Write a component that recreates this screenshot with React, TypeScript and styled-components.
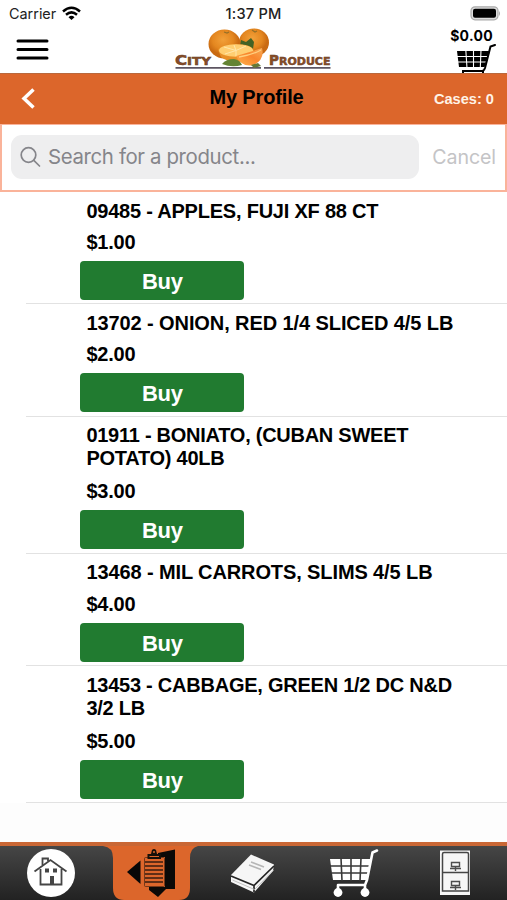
import React from 'react';
import styled, { createGlobalStyle } from 'styled-components';

const Global = createGlobalStyle`
  * { box-sizing: border-box; }
  html, body { margin: 0; padding: 0; }
  body { font-family: "Liberation Sans", Arial, sans-serif; color: #000; background: #fff; }
  svg { display: block; flex: none; }
  button { font: inherit; border: 0; padding: 0; margin: 0; background: none; }
`;

const Screen = styled.main`
  width: 507px; height: 900px; overflow: hidden;
  display: flex; flex-direction: column; background: #fdfdfd;
`;
const StatusBar = styled.div`
  height: 27px; flex: none; display: grid; grid-template: 27px / 1fr auto 1fr;
  align-items: center; padding: 0 6px 0 9px; background: #fff;
  font: 500 14px/26px Inter, sans-serif; color: #222;
`;
const Carrier = styled.div`
  display: flex; align-items: center; gap: 6px; font-weight: 400; font-size: 14.4px;
`;
const Clock = styled.div`font-size: 14.6px; line-height: 27px; letter-spacing: 0.2px; padding-right: 3px; margin-top: 1px;`;
const Battery = styled.div`display: flex; justify-content: flex-end;`;
const Header = styled.header`
  height: 46px; flex: none; display: flex; align-items: flex-start; background: #fff;
`;
const MenuButton = styled.button`
  width: 175px; height: 46px; padding: 12px 0 0 16px; display: flex; align-items: flex-start;
`;
const CartSummary = styled.div`
  margin-left: auto; width: 78px; height: 46px; padding-right: 10px;
  display: flex; flex-direction: column; align-items: flex-end;
`;
const CartTotal = styled.span`
  font: 700 14px/17px Inter, sans-serif; letter-spacing: 0.3px; padding-right: 4px;
`;
const TitleBar = styled.div`
  height: 51px; flex: none; display: grid; grid-template-columns: 1fr auto 1fr;
  align-items: center; background: #dc662b; border-top: 1px solid #b9683d; padding: 0 13px 0 21px;
`;
const Title = styled.h1`
  margin: 0 2px 4px 0; font-size: 20px; line-height: 24px; font-weight: 700; letter-spacing: -0.15px;
`;
const Cases = styled.span`
  text-align: right; color: #fff3e6; font-size: 14.6px; font-weight: 700;
`;
const SearchBar = styled.div`
  height: 68px; flex: none; display: flex; align-items: center; background: #fff;
  border: 2px solid #fab39a; border-top-width: 1px; padding: 0 9px 1px;
`;
const SearchField = styled.div`
  width: 408px; height: 44px; border-radius: 11px; background: #eeeeef;
  display: flex; align-items: center; padding-left: 9px; gap: 7px;
  color: #85858a; font: 400 20.4px/46px Inter, sans-serif; letter-spacing: -0.36px;
`;
const Cancel = styled.button`
  margin-left: auto; color: #c4c4c6; font: 400 19.6px/44px Inter, sans-serif; letter-spacing: -0.1px;
`;
const List = styled.ul`list-style: none; margin: 0; padding: 0; flex: 1; min-height: 0;`;
const Row = styled.li<{ $height: number }>`
  height: ${p => p.$height}px; background: #fff; padding: 7.5px 40px 4.2px 80.4px;
  display: flex; flex-direction: column; align-items: flex-start;
  background-image: linear-gradient(#e2e2e2, #e2e2e2);
  background-size: calc(100% - 26px) 1px; background-position: right bottom; background-repeat: no-repeat;
`;
const Name = styled.div<{ $spacing: number }>`
  padding-left: 6px; font-size: 20px; line-height: 23.3px; font-weight: 700;
  letter-spacing: ${p => p.$spacing}px; white-space: pre;
`;
const Price = styled.div`
  margin-top: auto; padding: 0 0 0 6px; font-size: 20px; line-height: 23.3px;
  font-weight: 700; letter-spacing: -0.2px;
`;
const BuyButton = styled.button`
  margin-top: 6.9px; width: 164px; height: 39px; flex: none; border-radius: 4px; background: #217b30;
  color: #fff; font-size: 22px; line-height: 41px; font-weight: 700; letter-spacing: -0.2px;
`;
const TabBar = styled.nav`
  height: 58px; flex: none; display: flex; border-top: 4px solid #c96735;
  background: linear-gradient(#464646, #222);
`;
const Tab = styled.div<{ $width: number }>`width: ${p => p.$width}px; height: 54px; flex: none;`;

const wheels = [8, 35];
const CartIcon = () => (
  <svg width="50" height="54" viewBox="0 0 50 54" fill="none">
    <path d="M0 13H41L37 34H3Z" fill="#fff" />
    <path d="M11 12L12 35M21 12V35M31 12L30 35M0 20H40M2 27H38" stroke="#393939" strokeWidth="1.6" />
    <path d="M47 4.500L42.500 6.500L37 34L35 39H8V44M35 39V44" stroke="#fff" strokeWidth="2.6" strokeLinecap="round" strokeLinejoin="round" />
    {wheels.map(x => <circle key={x} cx={x} cy="46.500" r="4.400" fill="#fff" />)}
  </svg>
);
const HeaderCart = () => (
  <svg width="40" height="29" viewBox="457 44 40 29" fill="none" stroke="#000">
    <path d="M457 51H490L484.500 67H459Z" fill="#000" stroke="none" />
    <path d="M465.800 50L467 68M473.500 50V68M481 50L480.300 68M457 56.500H489M458 62H487" stroke="#fff" strokeWidth="1.1" />
    <path d="M495 45L490.500 46.500L485 68Q484 71 482 71H463V74M483 71V74" strokeWidth="2" strokeLinecap="round" />
  </svg>
);

const Logo = () => (
  <svg width="157" height="45" viewBox="175 28 157 45">
    <defs>
      <radialGradient id="orange" cx=".45" cy=".35"><stop stopColor="#f2a039" /><stop offset=".65" stopColor="#e48720" /><stop offset="1" stopColor="#c96a12" /></radialGradient>
      <linearGradient id="wedge" x1="0" y1="1" x2="1" y2="0"><stop stopColor="#ffb34e" /><stop offset=".55" stopColor="#f9862c" /><stop offset="1" stopColor="#f8ab57" /></linearGradient>
    </defs>
    <path d="M175.500 68.800H261M264 68.800H330.500" stroke="#5d5561" strokeWidth="1.700" />
    <ellipse cx="254" cy="43.500" rx="15" ry="14" fill="url(#orange)" />
    <ellipse cx="224.500" cy="45" rx="16" ry="14.500" fill="url(#orange)" />
    <path d="M224 33l3 1 2-1M252 31l3 2 2-1" stroke="#967027" strokeWidth="1.2" fill="none" />
    <path d="M241 41l5 2 5-4 3 4-1 7-13-3z" fill="#426225" />
    <path d="M218 51Q220 45 235 45Q252 45 254 52L249 62Q229 65 221 58Z" fill="#e89028" />
    <ellipse cx="236" cy="51.500" rx="17" ry="6.200" fill="#ffce71" />
    <path d="M236 51.500L224 48M236 51.500L225 55M236 51.500V57M236 51.500L246 47M236 51.500L234 46" stroke="#ffe6aa" strokeWidth="1" />
    <path d="M222 65Q226 60 234 60Q240 61 242 66Q232 69 222 65" fill="#648333" />
    <path d="M236 57Q250 53 262 49Q265 60 254 66Q242 69 236 57Z" fill="url(#wedge)" />
    <path d="M239 58Q252 56 261 51" stroke="#ffd080" strokeWidth="1.3" fill="none" />
    <path d="M251 66l7-2 3 3-7 2z" fill="#667937" />
    <g fill="#8a4d26" stroke="#663d27" strokeWidth=".5" fontFamily="DejaVu Sans" fontWeight="700">
      <text x="175" y="66" fontSize="13.500" textLength="36" lengthAdjust="spacingAndGlyphs">C<tspan fontSize="11">ITY</tspan></text>
      <text x="269" y="66" fontSize="13.500" textLength="61.500" lengthAdjust="spacingAndGlyphs">P<tspan fontSize="11">RODUCE</tspan></text>
    </g>
  </svg>
);

const HomeIcon = () => (
  <svg width="113" height="54" viewBox="0 846 113 54">
    <path d="M103 846Q113 847 113 858V892Q114 900 121 900V846Z" fill="#dc662b" />
    <circle cx="51" cy="873" r="24" fill="#fff" />
    <g fill="none" stroke="#454545" strokeWidth="1.800">
      <path d="M34.500 871.500L50.500 860L66.500 871.500M40.500 869V884.500H61.500V869" />
      <path d="M42.500 865V858.500H48V861" />
    </g>
    <path d="M50 876H54V884H50ZM45 868.500H49V872.500H45ZM53 868.500H57V872.500H53Z" fill="#454545" />
  </svg>
);
const ProfileIcon = () => (
  <svg width="77" height="54" viewBox="113 846 77 54">
    <path d="M107 846H197Q190 848 190 857V888Q190 900 179 900H124Q113 900 113 888V846Z" fill="#dc662b" />
    <path d="M127 872L140.500 860.500V884Z" fill="#070707" />
    <path d="M158 853L175 849.500V889L166 889L158 897L149 890V887H165V857H158Z" fill="#0b0907" />
    <rect x="144.500" y="857.500" width="20" height="29" rx="1" fill="#dc662b" stroke="#5a2c15" strokeWidth=".8" />
    <path d="M145 862H163M145 866H163M145 870H163M145 874H163M145 878H163M145 882H163" stroke="#371d11" strokeWidth="1.600" />
    <path d="M147.500 859V854H151L152 850Q154 848 156 850L157 854H161V859Z" fill="#171009" />
    <circle cx="154" cy="852" r="1" fill="#dc662b" /><path d="M149.500 856.500H159" stroke="#dc662b" />
  </svg>
);
const BookIcon = () => (
  <svg width="125" height="54" viewBox="190 846 125 54">
    <path d="M190 858Q190 848 198 846H190Z" fill="#dc662b" />
    <path d="M251 854.500L274 864.500L273 871L254 892.500L231 882V875Z" fill="#f6f6f6" />
    <path d="M231 876L254 885.500L274 866M254 885V892" fill="none" stroke="#252525" strokeWidth="1.700" />
    <path d="M232.500 880L254.500 889.500L273.500 870" fill="none" stroke="#c2c2c2" strokeWidth="1" />
    <path d="M251 862L264 867M249 865L261 869.500" stroke="#b6b6b6" strokeWidth="1.700" />
  </svg>
);
const DrawerIcon = () => (
  <svg width="107" height="54" viewBox="400 846 107 54" fill="none">
    <rect x="440" y="850.500" width="30" height="44.500" fill="#f6f6f6" />
    <path d="M442.500 891V854Q442.500 852.500 444 852.500H467Q468.500 852.500 468.500 854V891ZM442.500 872.500H468.500" stroke="#454545" strokeWidth="1.500" />
    {[0, 19].map(y => <g key={y} transform={`translate(0 ${y})`} stroke="#4d4d4d" strokeWidth="1.400"><path d="M451.500 862.500H459.500V866.500H451.500ZM450 868.500H461M455.500 867V871" /></g>)}
  </svg>
);

const products = [
  { name: '09485 - APPLES, FUJI XF 88 CT', price: '$1.00', height: 112, spacing: -0.22 },
  { name: '13702 - ONION, RED 1/4 SLICED 4/5 LB', price: '$2.00', height: 112.5, spacing: -0.09 },
  { name: '01911 - BONIATO, (CUBAN SWEET\nPOTATO) 40LB', price: '$3.00', height: 137, spacing: -0.26 },
  { name: '13468 - MIL CARROTS, SLIMS 4/5 LB', price: '$4.00', height: 112.5, spacing: -0.11 },
  { name: '13453 - CABBAGE, GREEN 1/2 DC N&D\n3/2 LB', price: '$5.00', height: 137, spacing: -0.24 },
];

export default function App() {
  return (
    <>
      <Global />
      <Screen>
        <StatusBar>
          <Carrier>Carrier
            <svg width="19" height="15" viewBox="0 0 19 15" fill="none" stroke="#000" strokeWidth="2.500">
              <path d="M1 5.500Q9.500 -2 18 5.500M4 8.700Q9.500 4 15 8.700" /><path d="M6.500 11.200Q9.500 8.500 12.500 11.200L9.500 14Z" fill="#000" stroke="none" />
            </svg>
          </Carrier>
          <Clock>1:37 PM</Clock>
          <Battery>
            <svg width="31" height="15" viewBox="0 0 31 15"><rect x="1" y=".8" width="27" height="13" rx="4" fill="#ddd" stroke="#aaa" strokeWidth="1.200" /><rect x="3" y="2.800" width="23" height="9" rx="2" /><path d="M29 5Q31 7.500 29 10Z" fill="#aaa" /></svg>
          </Battery>
        </StatusBar>
        <Header>
          <MenuButton aria-label="Menu"><svg width="34" height="24" viewBox="0 0 34 24"><path d="M2 2H31M2 10.500H31M2 19H31" stroke="#000" strokeWidth="3" strokeLinecap="round" /></svg></MenuButton>
          <Logo />
          <CartSummary><CartTotal>$0.00</CartTotal><HeaderCart /></CartSummary>
        </Header>
        <TitleBar>
          <svg width="15" height="22" viewBox="0 0 15 22" fill="none" stroke="#fff" strokeWidth="3.500"><path d="M12.500 1.500L3 10.500L12.500 19.500" /></svg>
          <Title>My Profile</Title>
          <Cases>Cases: 0</Cases>
        </TitleBar>
        <SearchBar>
          <SearchField>
            <svg width="21" height="22" viewBox="0 0 21 22" fill="none" stroke="#85858a" strokeWidth="1.700" strokeLinecap="round"><circle cx="8.500" cy="9" r="7.300" /><path d="M13.800 14.300L19.500 20" /></svg>
            Search for a product...
          </SearchField>
          <Cancel>Cancel</Cancel>
        </SearchBar>
        <List>
          {products.map(p => (
            <Row key={p.name} $height={p.height}>
              <Name $spacing={p.spacing}>{p.name}</Name>
              <Price>{p.price}</Price>
              <BuyButton>Buy</BuyButton>
            </Row>
          ))}
        </List>
        <TabBar>
          <Tab $width={113}><HomeIcon /></Tab>
          <Tab $width={77}><ProfileIcon /></Tab>
          <Tab $width={140}><BookIcon /></Tab>
          <Tab $width={70}><CartIcon /></Tab>
          <Tab $width={107}><DrawerIcon /></Tab>
        </TabBar>
      </Screen>
    </>
  );
}
